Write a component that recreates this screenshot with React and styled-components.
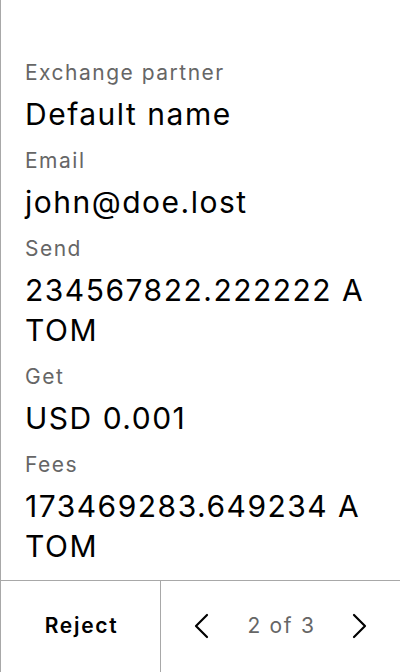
import React from "react";
import styled, { createGlobalStyle } from "styled-components";

const Global = createGlobalStyle`
  html, body { margin: 0; padding: 0; background: #fff; }
  body { font-family: Inter, "Noto Sans", sans-serif; }
  * { box-sizing: border-box; }
`;

const Screen = styled.div`
  width: 400px;
  height: 672px;
  display: flex;
  flex-direction: column;
  border-left: 1px solid #a8a8a8;
  background: #fff;
  color: #000;
`;

const Details = styled.div`
  flex: 1;
  display: flex;
  flex-direction: column;
  padding: 59px 24px 0 24px;
  overflow: hidden;
`;

const Field = styled.div`
  display: flex;
  flex-direction: column;
  gap: 7px;
  margin-bottom: 13px;
`;

const Label = styled.div`
  font-size: 21px;
  line-height: 28px;
  letter-spacing: 1.5px;
  color: #666;
`;

const Value = styled.div`
  font-size: 30px;
  line-height: 40px;
  letter-spacing: 1.5px;
  color: #000;
  word-break: break-all;
`;

const Footer = styled.div`
  height: 92px;
  flex-shrink: 0;
  display: grid;
  grid-template-columns: 160px 1fr;
  border-top: 1px solid #a8a8a8;
`;

const RejectButton = styled.button`
  border: none;
  border-right: 1px solid #a8a8a8;
  background: transparent;
  font-family: Inter, "Noto Sans", sans-serif;
  font-size: 21px;
  font-weight: 600;
  letter-spacing: 1.7px;
  color: #000;
  padding: 0 0 3px 2px;
  cursor: pointer;
`;

const Pager = styled.div`
  display: flex;
  align-items: center;
  justify-content: space-between;
  padding: 0 16px 1px 16px;
`;

const NavButton = styled.button`
  width: 48px;
  height: 48px;
  border: none;
  background: transparent;
  display: flex;
  align-items: center;
  justify-content: center;
  padding: 0;
  cursor: pointer;
`;

const PageText = styled.span`
  font-size: 21px;
  letter-spacing: 1.7px;
  color: #666;
  padding: 0 0 2px 2px;
`;

const Chevron = ({ dir }) => (
  <svg width="16" height="26" viewBox="0 0 16 26" fill="none">
    <polyline
      points={dir === "left" ? "14,2 3,13 14,24" : "2,2 13,13 2,24"}
      stroke="#000"
      strokeWidth="2.2"
      strokeLinecap="round"
      strokeLinejoin="round"
    />
  </svg>
);

const fields = [
  ["Exchange partner", "Default name"],
  ["Email", "john@doe.lost"],
  ["Send", "234567822.222222 ATOM"],
  ["Get", "USD 0.001"],
  ["Fees", "173469283.649234 ATOM"],
];

export default function App() {
  return (
    <>
      <Global />
      <Screen>
        <Details>
          {fields.map(([l, v]) => (
            <Field key={l}>
              <Label>{l}</Label>
              <Value>{v}</Value>
            </Field>
          ))}
        </Details>
        <Footer>
          <RejectButton>Reject</RejectButton>
          <Pager>
            <NavButton aria-label="Previous">
              <Chevron dir="left" />
            </NavButton>
            <PageText>2 of 3</PageText>
            <NavButton aria-label="Next">
              <Chevron dir="right" />
            </NavButton>
          </Pager>
        </Footer>
      </Screen>
    </>
  );
}
